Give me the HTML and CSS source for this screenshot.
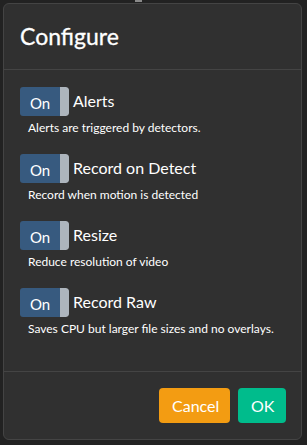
FILE: index.html
```html
<!DOCTYPE html>
<html lang="en">
<head>
    <meta charset="UTF-8">
    <meta name="viewport" content="width=device-width, initial-scale=1.0">
    <title>Configure</title>
    <link rel="stylesheet" href="styles.css">
</head>
<body>
    <div class="backdrop-tab"></div>
    <div class="modal">
        <div class="modal-header">
            <h4 class="modal-title">Configure</h4>
        </div>
        <div class="modal-body">
            <div class="option">
                <div class="option-top">
                    <div class="toggle"><span class="toggle-on">On</span><span class="toggle-handle"></span></div>
                    <span class="option-label">Alerts</span>
                </div>
                <p class="option-help">Alerts are triggered by detectors.</p>
            </div>
            <div class="option">
                <div class="option-top">
                    <div class="toggle"><span class="toggle-on">On</span><span class="toggle-handle"></span></div>
                    <span class="option-label">Record on Detect</span>
                </div>
                <p class="option-help">Record when motion is detected</p>
            </div>
            <div class="option">
                <div class="option-top">
                    <div class="toggle"><span class="toggle-on">On</span><span class="toggle-handle"></span></div>
                    <span class="option-label">Resize</span>
                </div>
                <p class="option-help">Reduce resolution of video</p>
            </div>
            <div class="option">
                <div class="option-top">
                    <div class="toggle"><span class="toggle-on">On</span><span class="toggle-handle"></span></div>
                    <span class="option-label">Record Raw</span>
                </div>
                <p class="option-help">Saves CPU but larger file sizes and no overlays.</p>
            </div>
        </div>
        <div class="modal-footer">
            <button class="btn btn-warning">Cancel</button>
            <button class="btn btn-success">OK</button>
        </div>
    </div>
</body>
</html>
```

FILE: styles.css
```css
body {
    font-family: Lato, "Open Sans", sans-serif;
    background: #222222;
    color: #ffffff;
    margin: 0;
    padding: 3px;
    position: relative;
}

/* bout de l'element derriere la fenetre */
.backdrop-tab {
    position: absolute;
    top: 0;
    left: 135px;
    width: 7px;
    height: 2px;
    background: #8a8a8a;
}

.modal {
    width: 299px;
    height: 437px;
    box-sizing: border-box;
    background: #303030;
    border: 1px solid #444444;
    border-radius: 6px;
    display: flex;
    flex-direction: column;
}

.modal-header {
    padding: 16px 19px 16px 16px;
    border-bottom: 1px solid #444444;
    height: 67px;
    box-sizing: border-box;
    display: flex;
    align-items: center;
}

.modal-title {
    margin: 0;
    font-size: 23px;
    font-weight: 400;
    line-height: 1.2;
    -webkit-text-stroke: 0.3px #ffffff;
}

.modal-body {
    flex: 1;
    padding: 17px 16px 16px;
}

.option {
    margin-bottom: 18px;
}

.option-top {
    display: flex;
    align-items: flex-start;
}

.toggle {
    display: flex;
    width: 49px;
    height: 29px;
    border-radius: 3px;
    overflow: hidden;
}

.toggle-on {
    width: 40px;
    background: #375a7f;
    color: #ffffff;
    font-size: 15px;
    display: flex;
    align-items: center;
    justify-content: center;
    padding-top: 2px;
    box-sizing: border-box;
}

.toggle-handle {
    flex: 1;
    background: #adb5bd;
    border-radius: 0 3px 3px 0;
}

.option-label {
    margin-left: 4px;
    font-size: 16px;
    line-height: 1;
    padding-top: 6px;
}

.option-help {
    margin: 4px 0 0 8px;
    font-size: 12px;
    line-height: 16px;
}

.modal-footer {
    border-top: 1px solid #444444;
    padding: 16px 15px 16px 16px;
    display: flex;
    justify-content: flex-end;
    gap: 8px;
}

.btn {
    font-family: inherit;
    font-size: 16px;
    color: #ffffff;
    border: none;
    border-radius: 4px;
    height: 35px;
    padding: 0 13px;
}

.btn-warning {
    background: #f39c12;
    width: 71px;
}

.btn-success {
    background: #00bc8c;
    width: 48px;
}
```
